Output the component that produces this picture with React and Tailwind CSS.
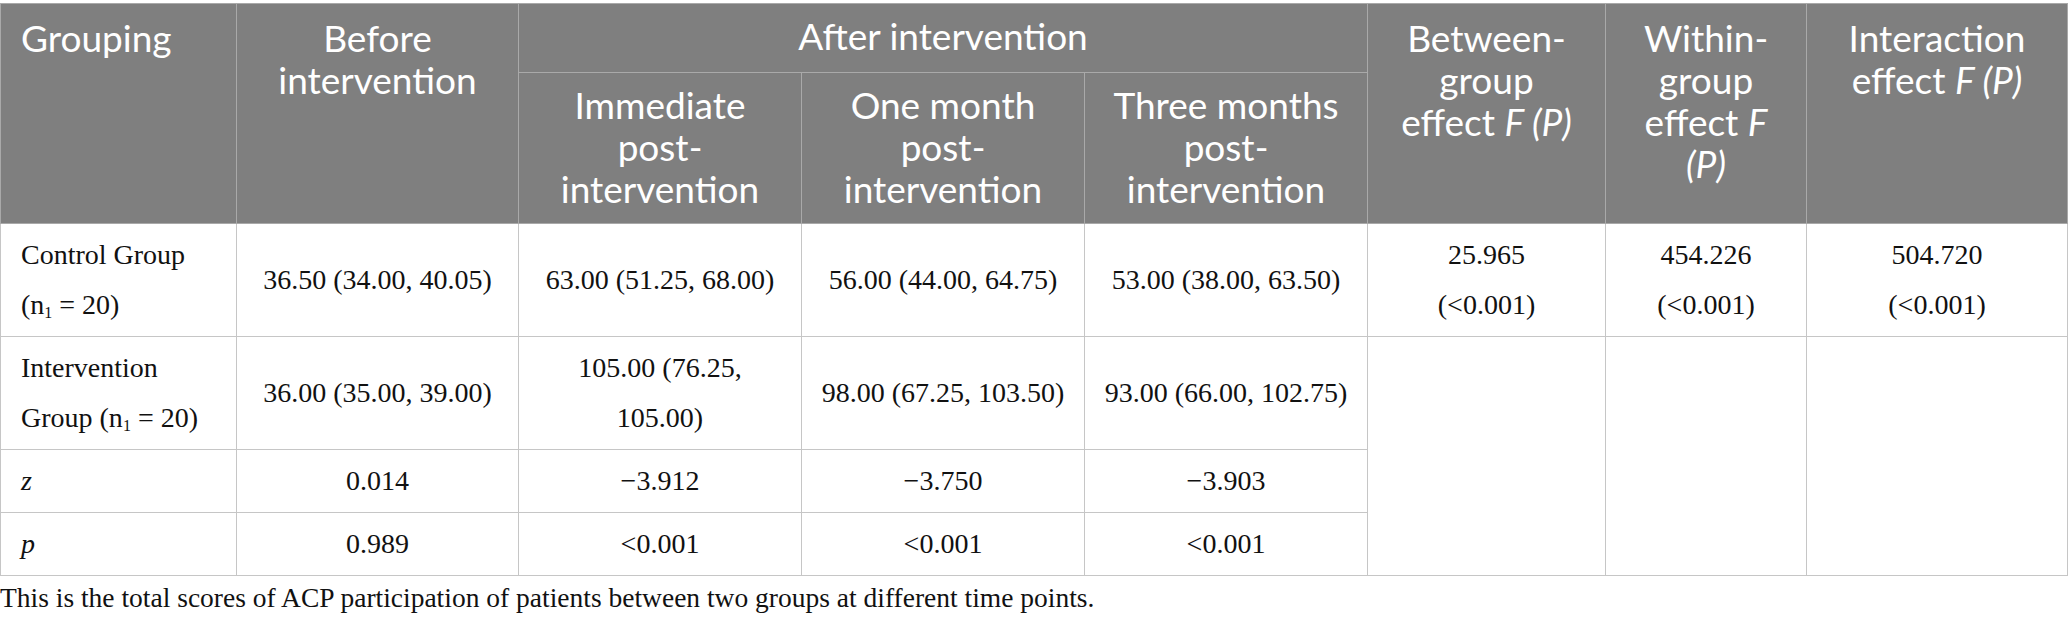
import React from 'react'

const head = "font-['Lato',sans-serif] text-white text-[37px] leading-[42px] font-normal"
const body = "font-['Liberation_Serif',serif] text-[#111111] text-[28px] leading-[50px]"

function N1() {
  return (
    <>
      (n<sub className="text-[16px] bottom-[-4px]">1</sub> = 20)
    </>
  )
}

function Num({ children, rowSpan }) {
  return (
    <td rowSpan={rowSpan} className="border border-[#c6c6c6] px-4 py-[6px] text-center align-middle">
      {children}
    </td>
  )
}

export default function App() {
  return (
    <div className="bg-white w-[2068px] h-[623px] pt-[3px]">
      <table className="table-fixed border-collapse w-[2067px]">
        <colgroup>
          <col className="w-[236px]" />
          <col className="w-[282px]" />
          <col className="w-[283px]" />
          <col className="w-[283px]" />
          <col className="w-[283px]" />
          <col className="w-[238px]" />
          <col className="w-[201px]" />
          <col className="w-[261px]" />
        </colgroup>
        <thead className={`bg-[#7f7f7f] ${head}`}>
          <tr className="h-[69px]">
            <th rowSpan={2} className="border border-[#a9a9a9] px-5 pt-[13px] text-left align-top font-normal">
              Grouping
            </th>
            <th rowSpan={2} className="border border-[#a9a9a9] px-2 pt-[13px] text-center align-top font-normal">
              Before<br />intervention
            </th>
            <th colSpan={3} className="border border-[#a9a9a9] px-3 pt-[11px] text-center align-top font-normal">
              After intervention
            </th>
            <th rowSpan={2} className="border border-[#a9a9a9] px-2 pt-[13px] text-center align-top font-normal">
              Between-<br />group<br />effect <i>F (P)</i>
            </th>
            <th rowSpan={2} className="border border-[#a9a9a9] px-2 pt-[13px] text-center align-top font-normal">
              Within-<br />group<br />effect <i>F</i><br /><i>(P)</i>
            </th>
            <th rowSpan={2} className="border border-[#a9a9a9] px-2 pt-[13px] text-center align-top font-normal">
              Interaction<br />effect <i>F (P)</i>
            </th>
          </tr>
          <tr className="h-[151px]">
            <th className="border border-[#a9a9a9] px-2 pt-[11px] text-center align-top font-normal">
              Immediate<br />post-<br />intervention
            </th>
            <th className="border border-[#a9a9a9] px-2 pt-[11px] text-center align-top font-normal">
              One month<br />post-<br />intervention
            </th>
            <th className="border border-[#a9a9a9] px-2 pt-[11px] text-center align-top font-normal">
              Three months<br />post-<br />intervention
            </th>
          </tr>
        </thead>
        <tbody className={body}>
          <tr className="h-[112px]">
            <td className="border border-[#c6c6c6] px-5 py-[6px] text-left align-middle">
              Control Group<br /><N1 />
            </td>
            <Num>36.50 (34.00, 40.05)</Num>
            <Num>63.00 (51.25, 68.00)</Num>
            <Num>56.00 (44.00, 64.75)</Num>
            <Num>53.00 (38.00, 63.50)</Num>
            <Num>25.965<br />(&lt;0.001)</Num>
            <Num>454.226<br />(&lt;0.001)</Num>
            <Num>504.720<br />(&lt;0.001)</Num>
          </tr>
          <tr className="h-[111px]">
            <td className="border border-[#c6c6c6] px-5 py-[6px] text-left align-middle">
              Intervention<br />Group <N1 />
            </td>
            <Num>36.00 (35.00, 39.00)</Num>
            <Num>105.00 (76.25,<br />105.00)</Num>
            <Num>98.00 (67.25, 103.50)</Num>
            <Num>93.00 (66.00, 102.75)</Num>
            <Num rowSpan={3}></Num>
            <Num rowSpan={3}></Num>
            <Num rowSpan={3}></Num>
          </tr>
          <tr className="h-[63px]">
            <td className="border border-[#c6c6c6] px-5 py-[6px] text-left align-middle italic">z</td>
            <Num>0.014</Num>
            <Num>−3.912</Num>
            <Num>−3.750</Num>
            <Num>−3.903</Num>
          </tr>
          <tr className="h-[61px]">
            <td className="border border-[#c6c6c6] px-5 py-[6px] text-left align-middle italic">p</td>
            <Num>0.989</Num>
            <Num>&lt;0.001</Num>
            <Num>&lt;0.001</Num>
            <Num>&lt;0.001</Num>
          </tr>
        </tbody>
      </table>
      <p className="mt-[2px] font-['Liberation_Serif',serif] text-[#111111] text-[27.5px] leading-[40px]">
        This is the total scores of ACP participation of patients between two groups at different time points.
      </p>
    </div>
  )
}
